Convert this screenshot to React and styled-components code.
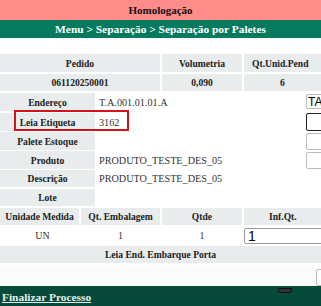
import React from "react";
import styled, { createGlobalStyle } from "styled-components";

const Global = createGlobalStyle`
  html, body { margin: 0; padding: 0; background: #fff; overflow: hidden; }
  body { font-family: "Liberation Serif", "Times New Roman", serif; }
`;

const Page = styled.div`
  width: 321px;
  height: 306px;
  overflow: hidden;
  display: flex;
  flex-direction: column;
`;

const EnvBar = styled.div`
  height: 21px;
  background: #ff8c89;
  color: #111;
  font-weight: bold;
  font-size: 11px;
  display: flex;
  align-items: center;
  justify-content: center;
`;

const TitleBar = styled.div`
  height: 20px;
  background: #067a5c;
  color: #fff;
  font-weight: bold;
  font-size: 11.4px;
  display: flex;
  align-items: center;
  justify-content: center;
`;

const Content = styled.div`
  height: 244px;
  padding-top: 16px;
  box-sizing: border-box;
  width: 340px;
  display: flex;
  flex-direction: column;
  gap: 2px;
`;

const Grid = styled.div`
  display: grid;
  grid-template-columns: 79px 79px 80px 96px;
  grid-template-rows: ${(p) => p.$rows};
  gap: 2px;
`;

const Cell = styled.div`
  background: ${(p) => (p.$white ? "#fff" : "#e8ecec")};
  grid-column: span ${(p) => p.$span || 1};
  display: flex;
  align-items: center;
  justify-content: ${(p) => (p.$start ? "flex-start" : "center")};
  padding-left: ${(p) => p.$pl || 0}px;
  font-size: ${(p) => (p.$bold ? 9.6 : 10)}px;
  font-weight: ${(p) => (p.$bold ? "bold" : "normal")};
  color: ${(p) => (p.$bold ? "#222" : "#333")};
  box-sizing: border-box;
`;

const LabelRow = styled.div`
  display: grid;
  grid-template-columns: 95px 207px 1fr;
  column-gap: 2px;
  height: ${(p) => p.$h || 17}px;
`;

const Label = styled.div`
  background: #e8ecec;
  display: flex;
  align-items: center;
  justify-content: center;
  font-size: 9.6px;
  font-weight: bold;
  color: #222;
`;

const Value = styled.div`
  background: #fff;
  display: flex;
  align-items: center;
  font-size: 10.2px;
  color: #333;
  padding-left: 2px;
`;

const Side = styled.div`
  background: #fff;
  display: flex;
  align-items: flex-start;
  padding-top: ${(p) => p.$pt ?? 0}px;
`;

const SideInput = styled.div`
  width: 40px;
  height: ${(p) => p.$h || 17}px;
  flex-shrink: 0;
  box-sizing: border-box;
  border: ${(p) => (p.$focus ? "1.5px solid #222" : "1px solid #bbb")};
  border-radius: 2px;
  background: #fff;
  font-family: "Liberation Sans", Arial, sans-serif;
  font-size: 12px;
  color: #000;
  padding-left: 1px;
  line-height: 14px;
  overflow: hidden;
`;

const Highlight = styled.div`
  position: absolute;
  left: 14px;
  top: -3px;
  width: 115px;
  height: 21px;
  border: 2px solid #d0141c;
  box-sizing: border-box;
  pointer-events: none;
`;

const QtyInput = styled.div`
  width: 90px;
  height: 16px;
  box-sizing: border-box;
  border: 1px solid #999;
  border-radius: 2px;
  font-family: "Liberation Sans", Arial, sans-serif;
  font-size: 14px;
  color: #000;
  padding-left: 3px;
  line-height: 14px;
  background: #fff;
`;

const Rel = styled.div`
  position: relative;
`;

const LastRow = styled.div`
  height: 19px;
  width: 340px;
  background: #fafbfb;
  display: flex;
  align-items: flex-start;
  padding-left: 316px;
  padding-top: 2px;
  box-sizing: border-box;
`;

const Footer = styled.div`
  height: 21px;
  background: #074a3a;
  position: relative;
  display: flex;
  align-items: center;
  padding-left: 2px;
`;

const FinLink = styled.a`
  color: #e6efe9;
  font-weight: bold;
  font-size: 11.4px;
  text-decoration: underline;
  margin-top: 1px;
`;

const TinyBtn = styled.div`
  position: absolute;
  left: 278px;
  top: 2px;
  width: 12px;
  height: 3px;
  background: #333;
  border: 1px solid #111;
  border-radius: 1px;
`;

export default function App() {
  return (
    <>
      <Global />
      <Page>
        <EnvBar>Homologação</EnvBar>
        <TitleBar>Menu &gt; Separação &gt; Separação por Paletes</TitleBar>
        <Content>
          <Grid $rows="18px 17px">
            <Cell $bold $span={2}>Pedido</Cell>
            <Cell $bold>Volumetria</Cell>
            <Cell $bold $start $pl={8}>Qt.Unid.Pend</Cell>
            <Cell $bold $span={2}>061120250001</Cell>
            <Cell $bold>0,090</Cell>
            <Cell $bold $start $pl={36}>6</Cell>
          </Grid>
          <LabelRow $h={18}>
            <Label>Endereço</Label>
            <Value>T.A.001.01.01.A</Value>
            <Side $pt={1}><SideInput $h={15}>TA</SideInput></Side>
          </LabelRow>
          <Rel>
            <LabelRow>
              <Label>Leia Etiqueta</Label>
              <Value>3162</Value>
              <Side><SideInput $focus $h={18} /></Side>
            </LabelRow>
            <Highlight />
          </Rel>
          <LabelRow>
            <Label>Palete Estoque</Label>
            <Value />
            <Side $pt={1}><SideInput /></Side>
          </LabelRow>
          <LabelRow>
            <Label>Produto</Label>
            <Value>PRODUTO_TESTE_DES_05</Value>
            <Side $pt={1}><SideInput /></Side>
          </LabelRow>
          <LabelRow>
            <Label>Descrição</Label>
            <Value>PRODUTO_TESTE_DES_05</Value>
            <Side />
          </LabelRow>
          <LabelRow>
            <Label>Lote</Label>
            <Value />
            <Side />
          </LabelRow>
          <Grid $rows="17px 17px 17px">
            <Cell $bold>Unidade Medida</Cell>
            <Cell $bold>Qt. Embalagem</Cell>
            <Cell $bold>Qtde</Cell>
            <Cell $bold $start $pl={25}>Inf.Qt.</Cell>
            <Cell $white $pl={6}>UN</Cell>
            <Cell $white>1</Cell>
            <Cell $white>1</Cell>
            <Cell $white $start><QtyInput>1</QtyInput></Cell>
            <Cell $bold $span={4} style={{ width: 321 }}>Leia End. Embarque Porta</Cell>
          </Grid>
        </Content>
        <LastRow><SideInput $h={17} /></LastRow>
        <Footer>
          <FinLink>Finalizar Processo</FinLink>
          <TinyBtn />
        </Footer>
      </Page>
    </>
  );
}
